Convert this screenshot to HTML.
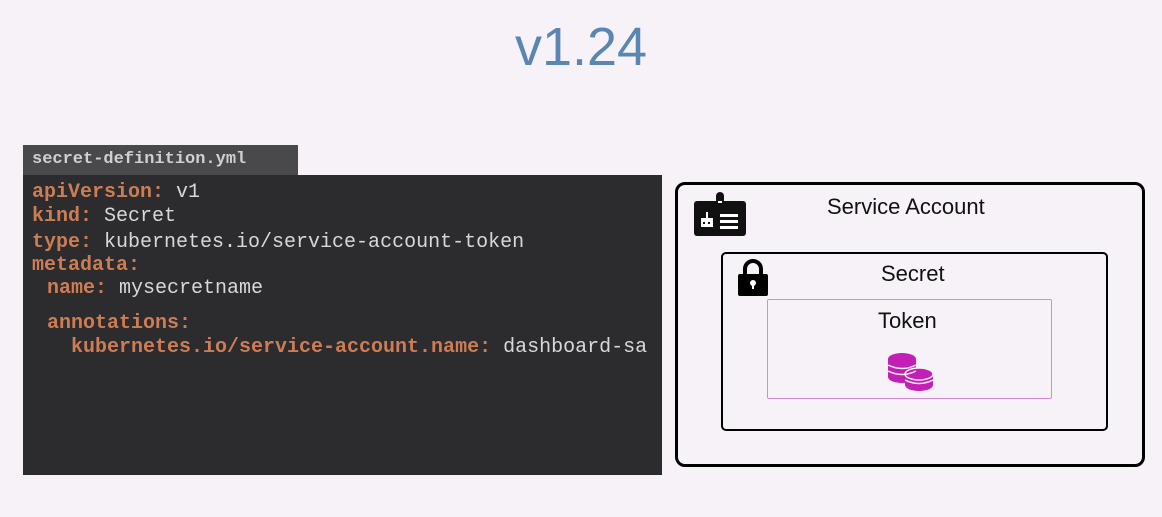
<!DOCTYPE html>
<html><head><style>
body{margin:0;width:1162px;height:517px;background:#f6f2f7;position:relative;overflow:hidden;font-family:"Liberation Sans",sans-serif}
.a{position:absolute}
.code{font-family:"Liberation Mono",monospace;font-size:20px;color:#d8d8d8;white-space:pre}
.k{color:#cc7d55;font-weight:bold}
.ln{position:absolute;left:32px;line-height:20px}
</style></head><body>
<div class="a" style="left:0;top:16px;width:1162px;text-align:center;font-size:54px;color:#5a86b2">v1.24</div>
<div class="a" style="left:23px;top:145px;width:275px;height:31px;background:#49484b"></div>
<div class="a code" style="left:32px;top:150px;font-size:17px;font-weight:bold;color:#d0d0d0">secret-definition.yml</div>
<div class="a" style="left:23px;top:175px;width:639px;height:300px;background:#2c2b2d"></div>
<div class="code">
<div class="ln" style="top:183px"><span class="k">apiVersion:</span> v1</div>
<div class="ln" style="top:207px"><span class="k">kind:</span> Secret</div>
<div class="ln" style="top:233px"><span class="k">type:</span> kubernetes.io/service-account-token</div>
<div class="ln" style="top:256px"><span class="k">metadata:</span></div>
<div class="ln" style="top:279px;left:47px"><span class="k">name:</span> mysecretname</div>
<div class="ln" style="top:314px;left:47px"><span class="k">annotations:</span></div>
<div class="ln" style="top:338px;left:71px"><span class="k">kubernetes.io/service-account.name:</span> dashboard-sa</div>
</div>
<div class="a" style="left:675px;top:182px;width:464px;height:279px;border:3px solid #000;border-radius:10px"></div>
<svg class="a" style="left:693px;top:192px" width="54" height="45" viewBox="0 0 54 45">
<rect x="1" y="9" width="52" height="35" rx="3" fill="#111"/>
<rect x="23" y="0" width="8" height="12" rx="4" fill="#111"/>
<rect x="25" y="9" width="4" height="2" fill="#fff"/>
<rect x="8" y="26" width="12" height="9" fill="#fff"/><rect x="13" y="20" width="2" height="6" fill="#fff"/>
<rect x="10" y="30" width="2" height="2" fill="#111"/><rect x="15" y="30" width="2" height="2" fill="#111"/>
<rect x="27" y="22" width="18" height="3" fill="#fff"/><rect x="27" y="28" width="18" height="3" fill="#fff"/><rect x="27" y="34" width="18" height="3" fill="#fff"/>
</svg>
<div class="a" style="left:827px;top:194px;font-size:22px;color:#111">Service Account</div>
<div class="a" style="left:721px;top:252px;width:383px;height:175px;border:2px solid #000;border-radius:5px"></div>
<svg class="a" style="left:737px;top:259px" width="32" height="38" viewBox="0 0 32 38">
<path d="M8 16V10a8 8 0 0 1 16 0v6" fill="none" stroke="#000" stroke-width="4"/>
<rect x="1" y="15" width="30" height="22" rx="2" fill="#000"/>
<circle cx="16" cy="24" r="3" fill="#fff"/><rect x="15" y="24" width="2" height="6" fill="#fff"/>
</svg>
<div class="a" style="left:881px;top:261px;font-size:22px;color:#111">Secret</div>
<div class="a" style="left:767px;top:299px;width:283px;height:98px;border:1px solid #d48ad4;border-radius:2px"></div>
<div class="a" style="left:878px;top:308px;font-size:22px;color:#111">Token</div>
<svg class="a" style="left:886px;top:352px" width="48" height="40" viewBox="0 0 48 40">
<g fill="#c21fb4">
<ellipse cx="16" cy="7" rx="14" ry="6"/><rect x="2" y="7" width="28" height="18"/><ellipse cx="16" cy="25" rx="14" ry="6"/>
<ellipse cx="33" cy="22" rx="14" ry="6"/><rect x="19" y="22" width="28" height="11"/><ellipse cx="33" cy="33" rx="14" ry="6"/>
</g>
<g stroke="#f6f2f7" stroke-width="1.5" fill="none">
<path d="M2 13q14 7 28 0M2 19q14 7 28 0M19 28q14 7 28 0"/>
<ellipse cx="33" cy="22" rx="14" ry="6"/>
</g>
</svg>
</body></html>
